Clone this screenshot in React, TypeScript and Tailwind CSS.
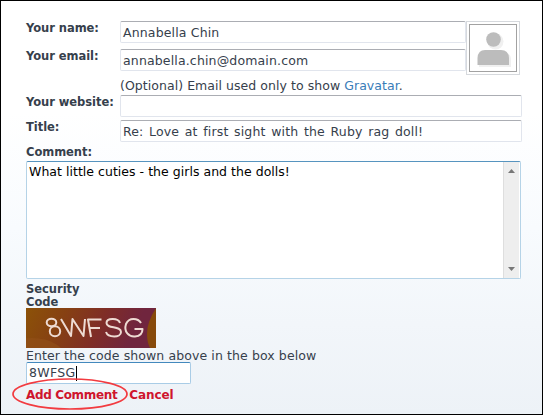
import React from "react";

function Label({ children }: { children: React.ReactNode }) {
  return (
    <label className="w-[94px] shrink-0 whitespace-nowrap text-[11.5px] font-bold leading-[15px] tracking-[-0.05px]">
      {children}
    </label>
  );
}

function Field({ children, className }: { children?: React.ReactNode; className: string }) {
  return (
    <div
      className={`h-[22px] shrink-0 whitespace-pre rounded-[2px] border border-[#e1e5ed] border-t-[#abadb3] bg-white pl-[2px] text-[12.5px] leading-[22px] tracking-[0.15px] ${className}`}
    >
      {children}
    </div>
  );
}

function Avatar() {
  return (
    <div className="h-[54px] w-[54px] shrink-0 border border-[#d6d9dd] bg-white p-[2px]">
      <div className="h-[48px] w-[48px] border border-[#a2a2a2]">
        <svg viewBox="0 0 46 46" className="block h-[46px] w-[46px]">
          <g fill="#f0f0f0">
            <circle cx="25.5" cy="16.5" r="8" />
            <path d="M9 42V34Q10 27 17 27H33Q40 27 41 34V42Z" />
          </g>
          <g fill="#bcbcbc">
            <circle cx="23.5" cy="14.5" r="7.3" />
            <path d="M7.5 40V33Q8 25 15 25H31Q38.5 25 39 33V40Z" />
          </g>
        </svg>
      </div>
    </div>
  );
}

function CaptchaImage() {
  return (
    <svg viewBox="0 0 130 40" className="block h-[40px] w-[130px]">
      <defs>
        <linearGradient id="cap" x1="0" y1="0" x2="1" y2="0.15">
          <stop offset="0" stopColor="#8c5208" />
          <stop offset="0.32" stopColor="#864013" />
          <stop offset="0.62" stopColor="#7f2d27" />
          <stop offset="0.9" stopColor="#70253e" />
        </linearGradient>
      </defs>
      <rect width="130" height="40" fill="url(#cap)" />
      <ellipse cx="6" cy="51" rx="34" ry="21" fill="#925019" opacity="0.65" />
      <path d="M130 0Q121 14 121 26Q121 34 124 40H130Z" fill="#874a0b" />
      <g fill="none" stroke="#eedbd3" strokeWidth="2" strokeLinejoin="round">
        <ellipse cx="25.5" cy="14.5" rx="4.8" ry="3.8" />
        <ellipse cx="29" cy="23.3" rx="5.2" ry="5" />
        <path d="M35 11L45 28L46.500 11L57.500 28L59 11" />
        <path d="M75.5 11.5H62L65 29M63.5 20H74" />
        <path d="M94 15C92 9.5 80.5 10 80.5 15C80.5 21 95 17.5 95 24C95 30 82 30 80 24" />
        <path d="M115 15C112 10 103 9 100 16C97.5 24 103 29 109 28.5C115 28 116.5 25 116.5 21H108.5" />
      </g>
    </svg>
  );
}

function Scrollbar() {
  return (
    <div className="flex h-full w-[16px] flex-col items-center justify-between border-l border-[#dedede] bg-[#eeeeee] py-[7px]">
      <svg viewBox="0 0 7 4" className="h-[4px] w-[7px]">
        <path d="M0 4L3.5 0L7 4Z" fill="#777" />
      </svg>
      <svg viewBox="0 0 7 4" className="h-[4px] w-[7px]">
        <path d="M0 0L3.5 4L7 0Z" fill="#777" />
      </svg>
    </div>
  );
}

export default function App() {
  return (
    <div className="h-[415px] w-[543px] overflow-hidden border border-black bg-[linear-gradient(to_bottom,#fff_0%,#fff_27%,#f8fbfe_55%,#f2f6fa_78%,#edf2f7_100%)] pl-[25px] pt-[20px] font-['DejaVu_Sans','Verdana',sans-serif] text-[#36404c]">
      <div className="flex h-[74px]">
        <div>
          <div className="flex h-[28px]">
            <Label>Your name:</Label>
            <Field className="w-[346px]">Annabella Chin</Field>
          </div>
          <div className="flex h-[28px]">
            <Label>Your email:</Label>
            <Field className="w-[346px]">annabella.chin@domain.com</Field>
          </div>
          <p className="ml-[94px] whitespace-nowrap text-[12.5px] leading-[18px] tracking-[0.05px]">
            (Optional) Email used only to show <a className="text-[#397cb8]">Gravatar</a>.
          </p>
        </div>
        <Avatar />
      </div>
      <div className="flex h-[25px]">
        <Label>Your website:</Label>
        <Field className="w-[402px]" />
      </div>
      <div className="flex h-[25px]">
        <Label>Title:</Label>
        <Field className="w-[402px] [word-spacing:1.5px]">Re: Love at first sight with the Ruby rag doll!</Field>
      </div>
      <div className="flex h-[16px]">
        <Label>Comment:</Label>
      </div>
      <div className="flex h-[118px] w-[495px] justify-between rounded-[2px] border border-[#b5d3e7] border-t-[#5794bf] bg-white pr-px">
        <p className="pl-[2px] text-[12.5px] leading-[20px] tracking-[0.03px] text-black">What little cuties - the girls and the dolls!</p>
        <Scrollbar />
      </div>
      <div className="pt-[4px] text-[11.5px] font-bold leading-[13px] tracking-[-0.02px]">
        Security
        <br />
        Code
      </div>
      <div className="-mt-px">
        <CaptchaImage />
      </div>
      <p className="h-[14px] whitespace-nowrap text-[12.5px] leading-[16px] tracking-[0.1px]">Enter the code shown above in the box below</p>
      <div className="flex h-[22px] w-[165px] items-center rounded-[2px] border border-[#a9cce6] border-t-[#4389bd] bg-white pl-[2px] pt-px text-[12.5px] tracking-[0.35px]">
        8WFSG
        <span className="h-[15px] w-px bg-black" />
      </div>
      <div className="relative flex h-[20px] items-center gap-[12px] whitespace-nowrap pt-px text-[12px] font-bold tracking-[-0.35px] text-[#cf152d]">
        <a>Add Comment</a>
        <a className="tracking-[-0.1px]">Cancel</a>
        <svg viewBox="0 0 118 34" className="absolute left-[-15px] top-[-7.5px] h-[34px] w-[118px]">
          <ellipse cx="59" cy="17" rx="57" ry="15" fill="none" stroke="#f23b40" strokeWidth="1.7" />
        </svg>
      </div>
    </div>
  );
}
